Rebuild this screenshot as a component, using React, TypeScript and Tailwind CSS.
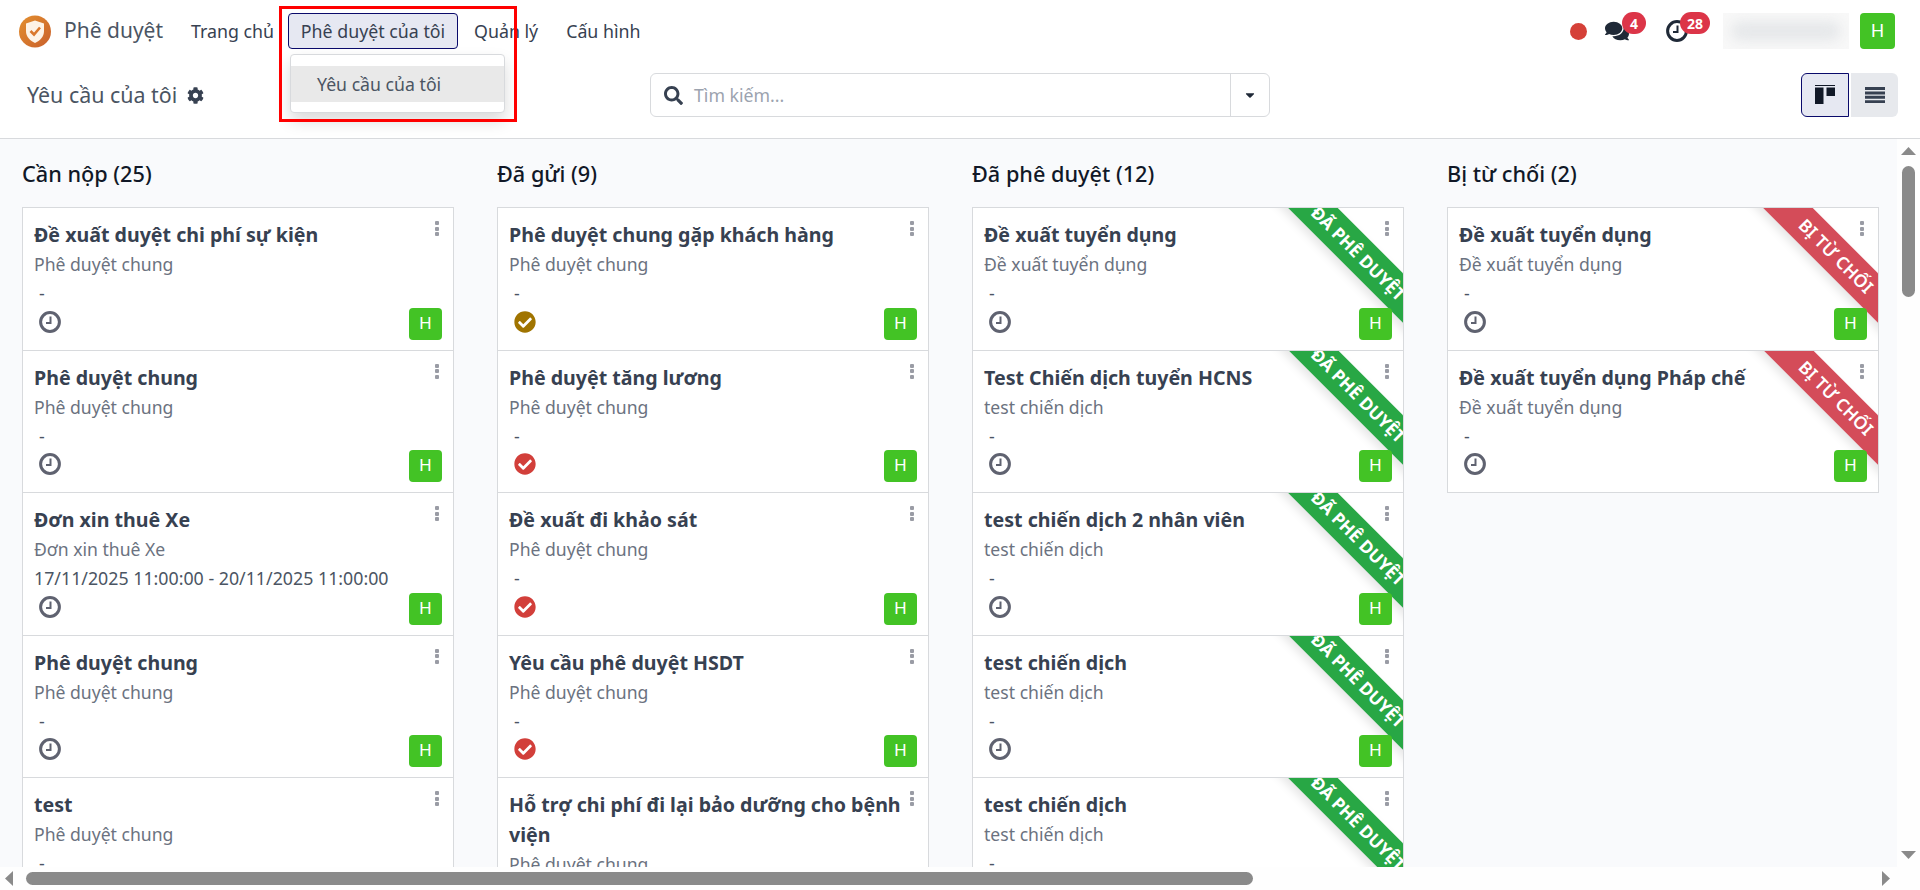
import React from 'react';
import { FaCaretDown, FaCheckCircle, FaCog, FaComments, FaSearch } from 'react-icons/fa';

type Status = 'clock' | 'brown' | 'red';

interface CardData {
  title: string;
  sub: string;
  date?: string;
  status?: Status;
}

interface ColumnData {
  name: string;
  ribbon?: 'ok' | 'no';
  cards: CardData[];
}

const columns: ColumnData[] = [
  {
    name: 'Cần nộp (25)',
    cards: [
      { title: 'Đề xuất duyệt chi phí sự kiện', sub: 'Phê duyệt chung' },
      { title: 'Phê duyệt chung', sub: 'Phê duyệt chung' },
      { title: 'Đơn xin thuê Xe', sub: 'Đơn xin thuê Xe', date: '17/11/2025 11:00:00 - 20/11/2025 11:00:00' },
      { title: 'Phê duyệt chung', sub: 'Phê duyệt chung' },
      { title: 'test', sub: 'Phê duyệt chung' },
    ],
  },
  {
    name: 'Đã gửi (9)',
    cards: [
      { title: 'Phê duyệt chung gặp khách hàng', sub: 'Phê duyệt chung', status: 'brown' },
      { title: 'Phê duyệt tăng lương', sub: 'Phê duyệt chung', status: 'red' },
      { title: 'Đề xuất đi khảo sát', sub: 'Phê duyệt chung', status: 'red' },
      { title: 'Yêu cầu phê duyệt HSDT', sub: 'Phê duyệt chung', status: 'red' },
      { title: 'Hỗ trợ chi phí đi lại bảo dưỡng cho bệnh viện', sub: 'Phê duyệt chung' },
    ],
  },
  {
    name: 'Đã phê duyệt (12)',
    ribbon: 'ok',
    cards: [
      { title: 'Đề xuất tuyển dụng', sub: 'Đề xuất tuyển dụng' },
      { title: 'Test Chiến dịch tuyển HCNS', sub: 'test chiến dịch' },
      { title: 'test chiến dịch 2 nhân viên', sub: 'test chiến dịch' },
      { title: 'test chiến dịch', sub: 'test chiến dịch' },
      { title: 'test chiến dịch', sub: 'test chiến dịch' },
    ],
  },
  {
    name: 'Bị từ chối (2)',
    ribbon: 'no',
    cards: [
      { title: 'Đề xuất tuyển dụng', sub: 'Đề xuất tuyển dụng' },
      { title: 'Đề xuất tuyển dụng Pháp chế', sub: 'Đề xuất tuyển dụng' },
    ],
  },
];

const ClockIcon = ({ className }: { className: string }) => (
  <svg viewBox="0 0 22 22" className={className} fill="none" stroke="currentColor">
    <circle cx="11" cy="11" r="9.4" strokeWidth="3" />
    <path d="M11.5 5.5V12H7" strokeWidth="2" />
  </svg>
);

const Logo = () => (
  <svg viewBox="0 0 32 33" className="w-[32px] h-[33px]">
    <defs>
      <linearGradient id="logo-grad" x1="0" y1="0" x2="1" y2="1">
        <stop offset="0" stopColor="#e38f2f" />
        <stop offset="1" stopColor="#c9602c" />
      </linearGradient>
    </defs>
    <circle cx="16" cy="16.5" r="16" fill="url(#logo-grad)" />
    <path d="M16 5.5 L25 8.5 V16 C25 22 21 25.5 16 28 C11 25.5 7 22 7 16 V8.5 Z" fill="#fdf3e7" />
    <path d="M11.5 16 L15 19.5 L21 12.5" fill="none" stroke="#d9772c" strokeWidth="2.6" />
  </svg>
);

const Avatar = () => (
  <div className="w-[33px] h-[32px] rounded bg-[#43c325] text-white flex items-center justify-center text-[17px] font-['Liberation_Sans',sans-serif]">
    H
  </div>
);

const Ribbon = ({ kind }: { kind: 'ok' | 'no' }) => (
  <div className="absolute top-0 right-0 w-[150px] h-[150px] overflow-hidden pointer-events-none">
    <span
      className={`absolute left-[-7.5px] top-[27.5px] w-[225px] h-[35px] rotate-45 flex items-center justify-center text-white text-[17.5px] uppercase shadow-[0_5px_10px_rgba(0,0,0,0.1)] ${
        kind === 'ok' ? 'bg-[#28a745] font-bold' : 'bg-[#d44c59] font-semibold pl-[7px]'
      }`}
    >
      {kind === 'ok' ? 'Đã phê duyệt' : 'Bị từ chối'}
    </span>
  </div>
);

const Kebab = () => (
  <div className="absolute top-[13px] right-[14px] flex flex-col gap-[1.5px]">
    <span className="w-[4px] h-[4px] rounded-[1px] bg-[#9a9ca5]" />
    <span className="w-[4px] h-[4px] rounded-[1px] bg-[#9a9ca5]" />
    <span className="w-[4px] h-[4px] rounded-[1px] bg-[#9a9ca5]" />
  </div>
);

const Card = ({ card, ribbon }: { card: CardData; ribbon?: 'ok' | 'no' }) => (
  <div className="relative bg-white border-t border-[#d8dadd] px-[11px] pt-[12px] min-h-[142.5px] flex flex-col overflow-hidden">
    {ribbon && <Ribbon kind={ribbon} />}
    <Kebab />
    <div className="relative text-[19.6px] leading-[30px] font-bold text-[#374151]">{card.title}</div>
    <div className="text-[17.6px] leading-[29px] text-[#6b7280]">{card.sub}</div>
    <div className="text-[17.8px] leading-[28.5px] h-[28.5px] text-[#4b5563] whitespace-nowrap">{card.date ?? <span className="ml-[5px]">-</span>}</div>
    <div className="relative flex items-center justify-between h-[32px] mb-[10px]">
      <div className="pl-[5px] -mt-[4px]">
        {card.status === 'brown' && <FaCheckCircle className="w-[22px] h-[22px] text-[#a07400]" />}
        {card.status === 'red' && <FaCheckCircle className="w-[22px] h-[22px] text-[#d23f3a]" />}
        {!card.status && <ClockIcon className="w-[22px] h-[22px] text-[#5f6270]" />}
      </div>
      <Avatar />
    </div>
  </div>
);

const Column = ({ column }: { column: ColumnData }) => (
  <div className="w-[432px] shrink-0">
    <div className="pt-[20px] pb-[18px] text-[21.7px] leading-[30px] text-[#111827] font-medium">{column.name}</div>
    <div className="border-x border-b border-[#d8dadd]">
      {column.cards.map((c, i) => (
        <Card key={i} card={c} ribbon={column.ribbon} />
      ))}
    </div>
  </div>
);

export default function App() {
  return (
    <div className="relative h-[890px] w-[1920px] flex flex-col overflow-hidden bg-white font-['Noto_Sans',sans-serif] text-[#374151]">
      {/* Top nav */}
      <header className="h-[62px] shrink-0 flex items-center pl-[19px] pr-[25px] bg-white">
        <Logo />
        <span className="ml-[13px] w-[115px] text-[21px] text-[#4b5563] whitespace-nowrap">Phê duyệt</span>
        <nav className="flex items-center gap-[4px] text-[17.8px] text-[#374151]">
          <a className="pl-[12px] pr-[10px]">Trang chủ</a>
          <a className="w-[170px] h-[36px] flex items-center justify-center rounded bg-[#e6e8f2] border border-[#0a0a6b] whitespace-nowrap">Phê duyệt của tôi</a>
          <a className="px-[12px]">Quản lý</a>
          <a className="px-[12px]">Cấu hình</a>
        </nav>
        <div className="ml-auto flex items-center">
          <span className="w-[17px] h-[17px] rounded-full bg-[#d54038]" />
          <div className="relative ml-[18px] w-[24px] h-[24px] text-[#1f2937] flex items-center">
            <FaComments className="w-[25px] h-[24px]" />
            <span className="absolute -top-[7px] left-[17px] w-[24px] h-[22px] rounded-full bg-[#dc3548] text-white text-[14px] font-bold flex items-center justify-center">4</span>
          </div>
          <div className="relative ml-[37px] w-[22px] h-[22px] text-[#1f2937]">
            <ClockIcon className="w-[22px] h-[22px]" />
            <span className="absolute -top-[8px] left-[14px] w-[30px] h-[22px] rounded-full bg-[#dc3548] text-white text-[14px] font-bold flex items-center justify-center">28</span>
          </div>
          <div className="ml-[35px] w-[126px] h-[36px] bg-[#f8f8f8] overflow-hidden p-[8px]">
            <div className="w-full h-full rounded-full bg-[#e6e8ea] blur-[6px]" />
          </div>
          <div className="ml-[11px] w-[35px] h-[36px] rounded bg-[#43c325] text-white text-[18px] flex items-center justify-center font-['Liberation_Sans',sans-serif]">H</div>
        </div>
      </header>

      {/* Control panel */}
      <div className="h-[77px] shrink-0 flex items-start pt-[11px] pr-[22px] bg-white border-b border-[#d8dadd]">
        <div className="w-[650px] pl-[27px] h-[44px] flex items-center gap-[10px]">
          <span className="text-[21.4px] text-[#4b5563]">Yêu cầu của tôi</span>
          <FaCog className="w-[17px] h-[17px] text-[#374151]" />
        </div>
        <div className="w-[620px] h-[44px] flex items-center border border-[#d8dadd] rounded-md">
          <FaSearch className="ml-[13px] w-[19px] h-[19px] text-[#374151]" />
          <span className="ml-[11px] flex-1 text-[17.7px] text-[#9ca3af]">Tìm kiếm...</span>
          <div className="w-[39px] h-full border-l border-[#d8dadd] flex items-center justify-center">
            <FaCaretDown className="w-[14px] h-[14px] text-[#1f2937]" />
          </div>
        </div>
        <div className="ml-auto flex gap-[2px]">
          <div className="w-[48px] h-[44px] rounded-l-md bg-[#e6e8f2] border border-[#0a0a6b] flex items-center justify-center">
            <svg viewBox="0 0 20 20" className="w-[20px] h-[20px] text-[#111827]" fill="currentColor">
              <path d="M0 0H20V1H0ZM0 2.5H8.5V19H0ZM11.5 2.5H20V11H11.5Z" />
            </svg>
          </div>
          <div className="w-[47px] h-[44px] rounded-r-md bg-[#e7e9ed] flex items-center justify-center">
            <svg viewBox="0 0 20 16" className="w-[20px] h-[16px] text-[#374151]" fill="currentColor">
              <path d="M0 0H20V3H0ZM0 4.4H20V7.4H0ZM0 8.8H20V11.8H0ZM0 13.2H20V16H0Z" />
            </svg>
          </div>
        </div>
      </div>

      {/* Kanban with scrollbars */}
      <div className="flex-1 min-h-0 flex">
        <main className="flex-1 min-w-0 overflow-hidden bg-[#f9fafc] flex gap-[43px] pl-[22px] items-start">
          {columns.map((c) => (
            <Column key={c.name} column={c} />
          ))}
        </main>
        <div className="w-[23px] shrink-0 bg-[#fefefe] flex flex-col items-center pt-[8px] pb-[8px]">
          <svg viewBox="0 0 15 8" className="w-[15px] h-[8px] text-[#8a8a8a]" fill="currentColor">
            <path d="M7.5 0L15 8H0Z" />
          </svg>
          <div className="mt-[11px] w-[13px] h-[131px] rounded-full bg-[#8a8a8a]" />
          <svg viewBox="0 0 15 8" className="mt-auto w-[15px] h-[8px] text-[#8a8a8a]" fill="currentColor">
            <path d="M0 0H15L7.5 8Z" />
          </svg>
        </div>
      </div>
      <div className="h-[23px] shrink-0 bg-[#fefefe] flex items-center pl-[5px] pr-[30px]">
        <svg viewBox="0 0 8 15" className="w-[8px] h-[15px] text-[#8a8a8a]" fill="currentColor">
          <path d="M8 0V15L0 7.5Z" />
        </svg>
        <div className="ml-[13px] w-[1227px] h-[13px] rounded-full bg-[#8a8a8a]" />
        <svg viewBox="0 0 8 15" className="ml-auto w-[8px] h-[15px] text-[#8a8a8a]" fill="currentColor">
          <path d="M0 0L8 7.5L0 15Z" />
        </svg>
      </div>

      {/* Open dropdown */}
      <div className="absolute left-[290px] top-[54px] w-[215px] h-[59px] py-[11px] bg-white border border-[#d8dadd] rounded shadow-[0_8px_16px_rgba(0,0,0,0.15)]">
        <div className="h-[36px] pl-[26px] bg-[#e9e9e9] flex items-center text-[17.7px] text-[#4b5563]">Yêu cầu của tôi</div>
      </div>

      {/* Red annotation box */}
      <div className="absolute left-[279px] top-[6px] w-[238px] h-[116px] border-[3px] border-[#ff0000] pointer-events-none" />
    </div>
  );
}
